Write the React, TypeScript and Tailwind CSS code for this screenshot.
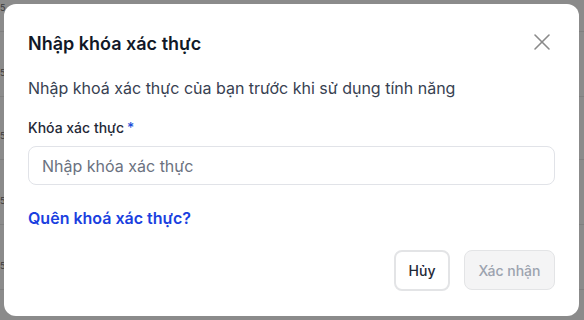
import { X } from "lucide-react";

const rows = [7, 72, 135, 200, 265];

export default function App() {
  return (
    <div
      className="relative h-[320px] w-[584px] overflow-hidden bg-[#8b8b8b]"
      style={{ fontFamily: "Inter, 'Noto Sans', sans-serif" }}
    >
      {/* dimmed page behind the dialog */}
      <div className="absolute inset-0">
        {rows.map((y) => (
          <div key={y} className="absolute left-0 right-0 border-b border-[#7f7f7f]" style={{ top: y + 24 }} />
        ))}
        {rows.map((y) => (
          <span key={`n${y}`} className="absolute left-0 text-[9px] leading-[10px] text-[#3a3a3a]" style={{ top: y - 4 }}>
            5
          </span>
        ))}
      </div>

      <div className="relative p-[4px] pr-[5px]">
        <div className="flex h-[312px] flex-col rounded-[12px] bg-white px-[24px] pt-[28px] pb-[25px]">
          <div className="flex items-center justify-between">
            <h2 className="text-[18px] font-semibold leading-[24px] text-[#111827]">Nhập khóa xác thực</h2>
            <X className="-mr-[1px] -mt-[4px] h-[28px] w-[28px] text-[#8a8a8a]" strokeWidth={1.3} />
          </div>

          <p className="mt-[21px] text-[16px] leading-[22px] text-[#374151]">
            Nhập khoá xác thực của bạn trước khi sử dụng tính năng
          </p>

          <label className="mt-[19px] text-[14px] font-medium leading-[20px] text-[#1f2937]">
            Khóa xác thực<span className="ml-[3px] text-[#1d4ed8]">*</span>
          </label>

          <input
            className="mt-[8px] h-[39px] w-full rounded-[8px] border border-[#e1e3e8] px-[13px] text-[16px] outline-none placeholder:text-[#6b7280]"
            placeholder="Nhập khóa xác thực"
          />

          <a className="mt-[22px] text-[16px] font-semibold leading-[22px] text-[#1a3fe0]">Quên khoá xác thực?</a>

          <div className="mt-auto flex justify-end gap-[14px]">
            <button className="h-[41px] w-[56px] rounded-[8px] border-2 border-[#e3e4e6] bg-white text-[14px] font-medium text-[#1f2937]">
              Hủy
            </button>
            <button className="h-[40px] w-[91px] rounded-[8px] border border-[#e3e4e6] bg-[#f4f4f5] text-[14px] font-medium text-[#9ca3af]">
              Xác nhận
            </button>
          </div>
        </div>
      </div>
    </div>
  );
}
